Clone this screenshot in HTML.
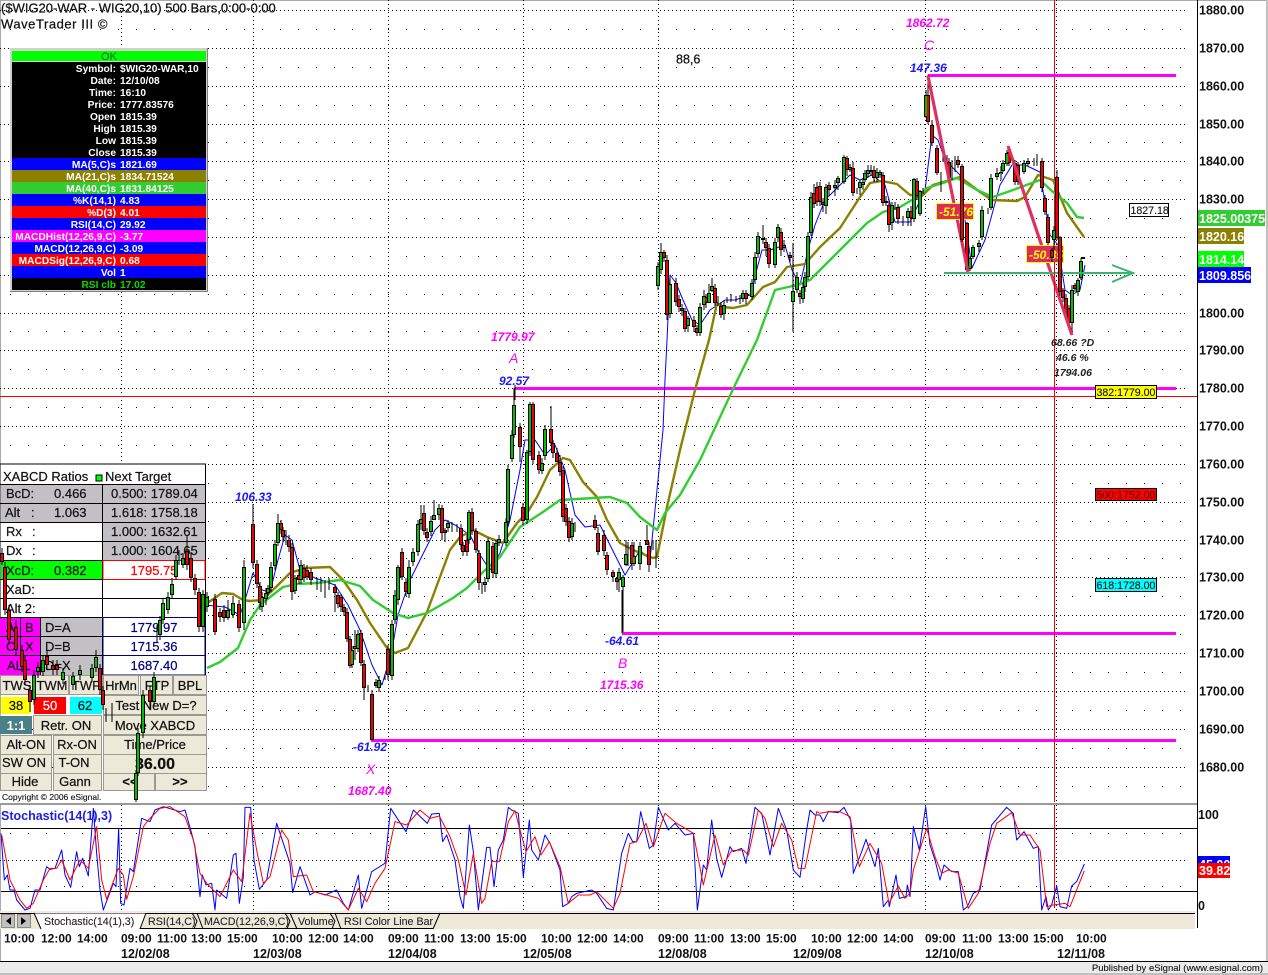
<!DOCTYPE html>
<html>
<head>
<meta charset="utf-8">
<title>WaveTrader chart</title>
<style>
html,body{margin:0;padding:0;background:#fff}
body{width:1268px;height:975px;overflow:hidden}
svg{display:block;font-family:"Liberation Sans",Arial,sans-serif}
.d{stroke:#000;stroke-width:1;stroke-dasharray:1 3;fill:none}
.s{stroke:#000;stroke-width:1;stroke-dasharray:1 17;stroke-dashoffset:-10;fill:none}
.ax{font-size:12.5px;font-weight:bold;fill:#111}
.tm{font-size:12px;font-weight:bold;fill:#111}
.ml{font-size:12px;font-style:italic;font-weight:bold;fill:#ff00ff}
.mb{font-size:14px;font-style:italic;fill:#ff00ff}
.bl{font-size:12px;font-style:italic;font-weight:bold;fill:#1a1aff}
.bk{font-size:10.5px;font-style:italic;font-weight:bold;fill:#222}
.i{font-size:10.2px;font-weight:bold;fill:#fff}
.e{text-anchor:end}
.p{font-size:13px;fill:#111;stroke:#111;stroke-width:.22}
.n{font-size:13px;fill:#000080;stroke:#000080;stroke-width:.22;text-anchor:middle}
.lb{font-size:10.6px;fill:#111;stroke:#111;stroke-width:.12}
.bt{fill:#ece9d8;stroke:#9a9a90;stroke-width:1}
.tb{font-size:10.7px;fill:#222;stroke:#222;stroke-width:.1}
.tt{font-size:13px;fill:#111;stroke:#111;stroke-width:.25}
.line{fill:none;stroke-linejoin:round}
</style>
</head>
<body>
<svg width="1268" height="975" viewBox="0 0 1268 975" xmlns="http://www.w3.org/2000/svg">
<rect width="1268" height="975" fill="#fff"/>
<rect x="0" y="0" width="1268" height="1" fill="#aaa"/>
<rect x="0" y="0" width="1" height="962" fill="#aaa"/>
<rect x="1266" y="0" width="2" height="975" fill="#c0c0c0"/>

<!-- dense horizontal grid -->
<g shape-rendering="crispEdges">
<path class="d" d="M0 10.5H1187M0 48.5H1187M0 86.5H1187M0 124.5H1187M0 161.5H1187M0 199.5H1187M0 237.5H1187M0 275.5H1187M0 313.5H1187M0 350.5H1187M0 388.5H1187M0 426.5H1187M0 464.5H1187M0 502.5H1187M0 540.5H1187M0 577.5H1187M0 615.5H1187M0 653.5H1187M0 691.5H1187M0 729.5H1187M0 767.5H1187"/>
<path class="s" d="M0 29.5H1187M0 67.5H1187M0 105.5H1187M0 142.5H1187M0 180.5H1187M0 218.5H1187M0 256.5H1187M0 294.5H1187M0 331.5H1187M0 369.5H1187M0 407.5H1187M0 445.5H1187M0 483.5H1187M0 521.5H1187M0 558.5H1187M0 596.5H1187M0 634.5H1187M0 672.5H1187M0 710.5H1187M0 748.5H1187M0 786.5H1187"/>
<path class="d" d="M121.5 0V802M253.5 0V802M388.5 0V802M523.5 0V802M658.5 0V802M793.5 0V802M925.5 0V802M1056.5 0V802"/>
<rect x="0" y="396" width="1197" height="1" fill="#f00"/>
<rect x="1054" y="0" width="1" height="802" fill="#f00"/>
<rect x="1197" y="0" width="1" height="928" fill="#000"/>
<rect x="0" y="803" width="1197" height="2" fill="#9a9a9a"/>
</g>

<!-- title -->
<text x="1" y="12.5" class="tt">($WIG20-WAR - WIG20,10) 500 Bars,0:00-0:00</text>
<text x="1" y="28.5" class="tt" letter-spacing=".55">WaveTrader III ©</text>
<text x="676" y="63.5" class="tt" style="font-size:12.5px">88,6</text>

<!-- y axis -->
<g class="ax">
<text x="1199" y="14.5">1880.00</text><text x="1199" y="52.5">1870.00</text><text x="1199" y="90.5">1860.00</text><text x="1199" y="128.5">1850.00</text><text x="1199" y="165.5">1840.00</text><text x="1199" y="203.5">1830.00</text><text x="1199" y="317.5">1800.00</text><text x="1199" y="354.5">1790.00</text><text x="1199" y="392.5">1780.00</text><text x="1199" y="430.5">1770.00</text><text x="1199" y="468.5">1760.00</text><text x="1199" y="506.5">1750.00</text><text x="1199" y="544.5">1740.00</text><text x="1199" y="581.5">1730.00</text><text x="1199" y="619.5">1720.00</text><text x="1199" y="657.5">1710.00</text><text x="1199" y="695.5">1700.00</text><text x="1199" y="733.5">1690.00</text><text x="1199" y="771.5">1680.00</text>
</g>
<rect x="1198" y="210" width="67" height="16" fill="#32cd32"/><text x="1199" y="223" font-size="12.5" font-weight="bold" fill="#fff">1825.00375</text>
<rect x="1198" y="228" width="46" height="16" fill="#8b8000"/><text x="1199" y="241" font-size="12.5" font-weight="bold" fill="#fff">1820.16</text>
<rect x="1198" y="251" width="46" height="16" fill="#00ff00"/><text x="1199" y="264" font-size="12.5" font-weight="bold" fill="#fff">1814.14</text>
<rect x="1198" y="267" width="53" height="16" fill="#0000ff"/><text x="1199" y="280" font-size="12.5" font-weight="bold" fill="#fff">1809.856</text>

<!-- magenta level lines -->
<g fill="#ff00ff" shape-rendering="crispEdges">
<rect x="928" y="74" width="248" height="3"/>
<rect x="515" y="387" width="661" height="3"/>
<rect x="622" y="632" width="554" height="3"/>
<rect x="371" y="739" width="805" height="3"/>
</g>
<path d="M622 590V633M371 710V740M515 385V400" stroke="#000" stroke-width="1" fill="none" shape-rendering="crispEdges"/>

<!-- XABCD panel -->
<g shape-rendering="crispEdges">
<rect x="0" y="464" width="205.5" height="211" fill="#fff" stroke="#000"/>
<rect x="1" y="484" width="101" height="38" fill="#c2c0c4"/>
<rect x="103" y="484" width="102" height="76" fill="#c2c0c4"/>
<rect x="1" y="560" width="101" height="19" fill="#00ff00"/>
<rect x="41" y="617" width="61" height="58" fill="#c2c0c4"/>
<rect x="0" y="617" width="40" height="58" fill="#ff00ff"/>
<path d="M0 484.5H205M0 503.5H205M0 522.5H205M0 541.5H205M0 560.5H103M0 579.5H205M0 598.5H205M0 617.5H103M0 636.5H103M0 655.5H103M102.5 484V675M40.5 617V675M20.5 617V655" stroke="#000" fill="none" stroke-width="1"/>
<rect x="103" y="560.5" width="102" height="19" fill="none" stroke="#f00"/>
<path d="M103 617.5H205V675H103ZM103 636.5H205M103 655.5H205" fill="none" stroke="#000080"/>
<rect x="96" y="475" width="6" height="6" fill="#00ff00" stroke="#000"/>
</g>
<g class="p">
<text x="3" y="481">XABCD Ratios</text><text x="105" y="481">Next Target</text>
<text x="6" y="498">BcD:</text><text x="54" y="498">0.466</text><text x="111" y="498">0.500: 1789.04</text>
<text x="5" y="517">Alt</text><text x="31" y="517">:</text><text x="54" y="517">1.063</text><text x="111" y="517">1.618: 1758.18</text>
<text x="6" y="536">Rx</text><text x="32" y="536">:</text><text x="111" y="536">1.000: 1632.61</text>
<text x="6" y="555">Dx</text><text x="32" y="555">:</text><text x="111" y="555">1.000: 1604.65</text>
<text x="6" y="575">XcD:</text><text x="54" y="575">0.382</text>
<text x="6" y="594">XaD:</text>
<text x="6" y="613">Alt 2:</text>
<text x="45" y="632">D=A</text><text x="45" y="651">D=B</text><text x="45" y="670">D=X</text>
<text x="6" y="632">A</text><text x="25" y="632">B</text><text x="6" y="651">C</text><text x="25" y="651">X</text><text x="7" y="670">ALL</text>
</g>
<text x="154" y="575" class="n" style="fill:#f00;stroke:#f00">1795.75</text>
<text x="154" y="632" class="n">1779.97</text>
<text x="154" y="651" class="n">1715.36</text>
<text x="154" y="670" class="n">1687.40</text>

<!-- buttons -->
<g shape-rendering="crispEdges">
<rect class="bt" x="0.5" y="675.5" width="34" height="19"/><rect class="bt" x="35.5" y="675.5" width="33" height="19"/><rect class="bt" x="69.5" y="675.5" width="33" height="19"/><rect class="bt" x="103.5" y="675.5" width="35" height="19"/><rect class="bt" x="140.5" y="675.5" width="32" height="19"/><rect class="bt" x="173.5" y="675.5" width="33" height="19"/>
<rect x="1" y="697" width="30" height="17" fill="#ffff00"/><rect x="34" y="697" width="32" height="17" fill="#f00"/><rect x="70" y="697" width="32" height="17" fill="#00ffff"/>
<rect class="bt" x="103.5" y="695.5" width="103" height="19"/>
<rect x="0" y="716" width="32" height="18" fill="#4a8088"/>
<rect class="bt" x="33.5" y="715.5" width="68" height="19"/><rect class="bt" x="103.5" y="715.5" width="103" height="19"/>
<rect class="bt" x="0.5" y="735.5" width="51" height="19"/><rect class="bt" x="53.5" y="735.5" width="48" height="19"/><rect class="bt" x="103.5" y="735.5" width="103" height="19"/>
<rect class="bt" x="0.5" y="754.5" width="51" height="19"/><rect class="bt" x="53.5" y="754.5" width="48" height="19"/><rect class="bt" x="103.5" y="754.5" width="103" height="19"/>
<rect class="bt" x="0.5" y="773.5" width="51" height="17"/><rect class="bt" x="53.5" y="773.5" width="48" height="17"/><rect class="bt" x="103.5" y="773.5" width="51" height="17"/><rect class="bt" x="155.5" y="773.5" width="51" height="17"/>
</g>
<g class="p" style="text-anchor:middle">
<text x="17" y="690">TWS</text><text x="52" y="690">TWM</text><text x="86" y="690">TWF</text><text x="121" y="690">HrMn</text><text x="157" y="690">FTP</text><text x="190" y="690">BPL</text>
<text x="16" y="710">38</text><text x="50" y="710" style="fill:#fff;stroke:#fff">50</text><text x="85" y="710">62</text><text x="156" y="710">Test New D=?</text>
<text x="16" y="730" style="fill:#fff;stroke:none;font-weight:bold">1:1</text><text x="66" y="730">Retr. ON</text><text x="155" y="730">Move XABCD</text>
<text x="26" y="749">Alt-ON</text><text x="77" y="749">Rx-ON</text><text x="155" y="749">Time/Price</text>
<text x="24" y="767">SW ON</text><text x="74" y="767">T-ON</text><text x="155" y="769" style="font-size:16px;font-weight:bold">36.00</text>
<text x="25" y="786">Hide</text><text x="75" y="786">Gann</text><text x="130" y="786" style="font-weight:bold">&lt;&lt;</text><text x="180" y="786" style="font-weight:bold">&gt;&gt;</text>
</g>
<rect x="0" y="791" width="130" height="12" fill="#fff"/>
<text x="2" y="800" font-size="8.5" fill="#111" stroke="#111" stroke-width=".12">Copyright © 2006 eSignal.</text>

<!-- data box -->
<g shape-rendering="crispEdges">
<rect x="10" y="48" width="198" height="244" fill="#d4d0c8"/>
<path d="M207.5 48V291.5H10" fill="none" stroke="#808080"/>
<rect x="12" y="51" width="194" height="10" fill="#00ff00"/>
<rect x="12" y="62" width="194" height="96" fill="#000"/>
<rect x="12" y="158" width="194" height="12" fill="#00f"/>
<rect x="12" y="170" width="194" height="12" fill="#8b8000"/>
<rect x="12" y="182" width="194" height="12" fill="#32cd32"/>
<rect x="12" y="194" width="194" height="12" fill="#00f"/>
<rect x="12" y="206" width="194" height="12" fill="#f00"/>
<rect x="12" y="218" width="194" height="12" fill="#00f"/>
<rect x="12" y="230" width="194" height="12" fill="#f0f"/>
<rect x="12" y="242" width="194" height="12" fill="#00f"/>
<rect x="12" y="254" width="194" height="12" fill="#f00"/>
<rect x="12" y="266" width="194" height="12" fill="#00f"/>
<rect x="12" y="278" width="194" height="12" fill="#000"/>
</g>
<text x="109" y="60" font-size="11" fill="#063" text-anchor="middle">OK</text>
<g class="i">
<text class="e" x="116" y="72">Symbol:</text><text x="120" y="72">$WIG20-WAR,10</text>
<text class="e" x="116" y="84">Date:</text><text x="120" y="84">12/10/08</text>
<text class="e" x="116" y="96">Time:</text><text x="120" y="96">16:10</text>
<text class="e" x="116" y="108">Price:</text><text x="120" y="108">1777.83576</text>
<text class="e" x="116" y="120">Open</text><text x="120" y="120">1815.39</text>
<text class="e" x="116" y="132">High</text><text x="120" y="132">1815.39</text>
<text class="e" x="116" y="144">Low</text><text x="120" y="144">1815.39</text>
<text class="e" x="116" y="156">Close</text><text x="120" y="156">1815.39</text>
<text class="e" x="116" y="168">MA(5,C)s</text><text x="120" y="168">1821.69</text>
<text class="e" x="116" y="180">MA(21,C)s</text><text x="120" y="180">1834.71524</text>
<text class="e" x="116" y="192">MA(40,C)s</text><text x="120" y="192">1831.84125</text>
<text class="e" x="116" y="204">%K(14,1)</text><text x="120" y="204">4.83</text>
<text class="e" x="116" y="216">%D(3)</text><text x="120" y="216">4.01</text>
<text class="e" x="116" y="228">RSI(14,C)</text><text x="120" y="228">29.92</text>
<text class="e" x="116" y="240">MACDHist(12,26,9,C)</text><text x="120" y="240">-3.77</text>
<text class="e" x="116" y="252">MACD(12,26,9,C)</text><text x="120" y="252">-3.09</text>
<text class="e" x="116" y="264">MACDSig(12,26,9,C)</text><text x="120" y="264">0.68</text>
<text class="e" x="116" y="276">Vol</text><text x="120" y="276">1</text>
<text class="e" x="116" y="288" style="fill:#00e000">RSI clb</text><text x="120" y="288" style="fill:#00e000">17.02</text>
</g>

<!-- MA lines under candles -->
<polyline class="line" stroke="#0000ff" stroke-width="1" points="205,605 225,607 240,615 245,600 253,573 262,590 270,592 278,560 285,535 292,540 300,570 315,578 335,585 348,605 360,630 372,665 382,685 392,650 398,615 410,580 420,560 435,530 445,520 455,525 470,535 480,555 490,570 500,553 510,520 520,470 525,440 535,440 545,455 555,445 565,470 575,515 585,527 600,525 610,545 625,575 640,550 650,560 657,490 663,430 665,380 667,340 670,275 676,283 683,300 692,320 700,325 710,310 725,300 735,300 750,295 762,250 770,250 785,245 792,270 800,285 808,250 815,225 825,200 835,190 850,175 860,180 872,175 885,185 895,222 910,222 925,190 932,135 938,140 945,160 960,175 965,220 972,268 985,240 1000,185 1012,165 1025,165 1040,172 1050,235 1058,245 1065,290 1072,295 1080,290 1085,265"/>
<polyline class="line" stroke="#8b8000" stroke-width="2.4" points="206,604 222,593 233,594 243,600 250,601 262,600 275,588 290,573 305,568 330,567 343,580 357,600 370,623 387,648 395,653 408,648 427,612 440,577 450,550 460,537 473,530 487,537 503,543 517,523 527,513 537,497 550,470 563,458 570,460 583,482 597,497 607,520 620,543 633,550 653,558 657,557 667,507 680,450 695,390 709,340 717,303 723,307 733,308 747,305 763,287 775,282 787,267 805,264 820,247 840,228 860,197 870,183 882,181 897,184 910,195 923,195 933,185 960,177 980,192 992,200 1017,201 1025,197 1038,175 1053,180 1067,213 1084,237"/>
<polyline class="line" stroke="#32cd32" stroke-width="2.4" points="207,668 220,662 238,648 250,620 260,605 283,587 297,584 317,583 340,580 360,586 373,600 393,613 408,618 427,613 453,598 467,588 483,572 500,557 520,527 543,512 560,500 577,499 610,497 627,503 640,517 657,530 665,513 680,495 700,460 735,385 757,340 775,290 797,285 810,280 833,257 867,223 883,212 900,207 917,197 927,188 943,183 957,178 977,190 993,197 1013,190 1040,180 1053,192 1067,203 1077,217 1084,218"/>

<!-- candles -->
<path fill="none" stroke="#000" stroke-width="1" shape-rendering="crispEdges" d="M2 548V565M5 562V615M9 605V645M16 620V655M22 645V672M25 655V685M30 685V712M34 670V705M38 662V678M43 655V676M47 650V670M53 660V675M57 660V675M63 668V684M73 672V690M80 665V680M92 664V682M96 650V672M100 664V695M103 686V710M106 708V722M112 703V722M136 770V802M138 728V776M143 690V738M150 686V708M154 672V706M157 625V642M160 616V640M163 598V624M168 592V614M172 578V598M176 555V580M179 550V565M183 553V568M187 535V570M191 552V582M195 574V595M199 588V632M203 590V632M207 592V612M215 594V635M220 608V622M224 605V622M228 600V620M233 596V618M239 600V632M244 560V630M253 504V568M257 560V588M260 582V610M262 592V612M266 588V605M268 585V596M271 562V592M275 540V570M278 514V546M281 520V534M283 527V542M286 530V545M289 535V552M292 543V600M295 575V594M299 570V584M301 560V584M304 564V582M307 565V580M311 568V585M317 578V590M321 578V592M325 580V598M329 578V590M335 584V612M338 592V608M341 594V612M344 604V616M347 608V642M350 636V668M352 646V668M355 630V660M358 630V652M361 630V666M364 660V700M368 685V692M372 690V740M376 679V688M379 676V692M385 674V680M388 645V680M392 620V680M395 590V624M398 565V605M402 548V580M406 578V596M409 560V598M413 548V566M418 520V556M421 505V530M424 505V535M427 528V542M431 516V536M434 500V520M439 504V520M442 505V540M445 528V542M448 520V532M452 522V532M457 524V532M461 524V550M463 542V556M467 535V556M469 510V544M472 508V535M476 528V553M479 550V590M482 582V594M485 578V592M488 538V582M493 542V578M496 540V578M499 535V546M506 518V546M508 465V525M512 430V462M514 388V438M520 423V462M523 503V525M527 450V524M530 402V456M533 402V464M539 451V474M542 458V474M545 425V460M551 406V446M553 440V458M557 448V462M560 455V476M563 466V522M566 504V526M569 517V542M572 518V540M575 522V532M595 515V530M598 527V555M604 530V556M607 552V575M613 570V582M617 577V590M619 568V592M623 575V632M626 540V566M628 542V566M632 542V570M634 542V566M640 542V570M647 525V542M649 542V572M653 540V550M656 540V568M658 262V290M661 243V274M664 250V262M667 255V320M670 278V318M676 278V306M679 295V312M682 304V316M685 308V332M688 316V332M694 316V332M697 325V336M700 303V336M704 290V310M706 294V308M709 284V302M712 278V292M715 284V306M718 296V306M721 302V318M724 300V320M727 297V303M731 294V302M736 296V302M740 295V304M743 290V302M746 290V304M752 279V300M755 252V284M758 232V258M763 225V244M766 238V256M769 244V268M775 238V268M778 224V242M781 228V256M784 240V252M790 252V262M793 243V332M797 272V293M800 290V304M803 283V303M805 272V292M808 232V280M811 192V236M814 184V208M817 182V206M820 182V206M823 198V212M826 184V214M829 182V196M835 180V196M838 176V190M844 155V184M847 156V176M850 164V172M853 162V196M857 188V194M860 180V195M863 178V190M865 170V182M868 165V178M871 165V176M874 166V182M877 168V182M880 170V178M883 172V206M886 196V206M889 200V232M892 202V230M895 202V210M898 204V224M903 216V226M908 208V226M911 206V226M914 178V222M917 178V200M920 190V216M923 188V194M926 90V118M928 75V124M932 120V146M937 145V175M941 172V192M943 155V162M947 155V162M949 158V182M952 160V180M955 156V172M958 156V168M962 164V242M967 222V272M970 256V271M973 245V259M979 240V252M982 206V240M988 208V214M991 174V210M997 168V180M1001 166V180M1003 160V172M1007 150V166M1009 148V166M1015 160V185M1018 162V185M1024 160V174M1028 158V166M1034 158V166M1037 154V166M1042 158V192M1045 195V215M1048 214V246M1052 248V262M1054 226V250M1057 170V240M1060 236V296M1063 288V302M1066 294V318M1069 305V326M1072 285V335M1075 283V292M1078 278V296M1081 258V280"/>

<path fill="none" stroke="#000" stroke-width="4" shape-rendering="crispEdges" d="M34 675V700M38 667V672M43 660V672M63 672V680M73 676V685M80 670V675M92 668V678M96 657V668M136 773V800M138 733V773M143 695V733M154 677V702M160 620V635M163 603V620M168 597V610M172 584V595M176 560V577M183 558V565M203 594V627M207 597V607M228 610V618M233 603V615M244 567V623M262 597V607M266 593V599M268 588V593M271 567V588M275 544V566M278 523V543M295 578V591M301 565V580M352 650V665M355 646V649M358 634V649M379 680V688M392 624V676M395 595V620M398 567V600M409 567V594M413 552V562M418 524V552M421 519V524M431 521V532M434 515V520M439 508V515M448 523V528M469 512V540M485 582V585M488 541V579M496 543V574M499 539V543M506 522V543M508 469V522M512 435V459M514 405V435M527 452V520M530 404V452M542 463V471M545 429V456M572 523V537M619 572V580M623 577V587M626 554V565M634 556V564M640 546V564M658 266V286M661 252V270M670 284V314M688 318V326M700 307V333M704 296V305M709 293V303M712 286V291M724 305V314M743 293V299M752 283V297M755 257V280M758 236V254M775 242V265M778 227V238M784 245V248M793 291V302M797 277V290M803 287V299M805 277V287M808 236V277M811 197V233M826 187V206M835 185V188M838 178V183M844 157V182M850 167V170M860 182V188M863 182V185M865 173V180M868 170V174M871 170V172M877 172V178M880 172V175M886 201V203M892 205V223M908 211V218M914 179V219M920 191V214M926 95V117M970 258V269M973 247V257M979 243V247M982 210V237M991 178V208M997 173V177M1001 172V174M1003 163V171M1007 153V164M1024 163V172M1028 161V164M1072 290V323M1078 280V292M1081 261V278"/>
<path fill="none" stroke="#000" stroke-width="4" shape-rendering="crispEdges" d="M2 553V562M5 567V610M9 610V640M16 627V650M22 650V667M25 660V680M30 690V702M47 656V665M53 665V670M57 665V670M100 668V690M103 690V705M150 690V702M187 551V565M191 558V578M195 578V590M199 592V627M215 599V632M220 612V617M224 610V618M239 604V628M253 524V563M257 564V584M260 586V603M281 523V530M283 530V537M289 540V547M292 547V592M299 575V580M304 568V578M307 570V577M311 572V580M335 587V593M338 595V604M341 597V607M344 607V612M347 612V639M350 639V666M361 633V663M364 664V688M372 694V740M376 682V686M388 649V675M402 552V577M406 582V592M424 513V531M427 532V538M442 508V533M445 530V533M461 528V545M463 545V552M467 540V552M472 512V531M476 531V550M479 553V583M493 546V573M520 427V447M523 507V521M533 404V460M539 455V470M551 429V443M553 443V453M557 453V462M560 462V472M563 470V517M566 508V522M569 521V538M595 520V528M598 533V552M604 535V551M607 555V570M613 572V577M617 578V582M632 545V564M647 540V545M649 546V565M664 252V258M667 260V315M676 283V302M679 299V307M682 308V311M685 311V329M694 320V327M697 328V333M706 297V303M715 288V303M721 306V315M746 293V299M763 238V240M766 242V248M769 248V264M781 232V250M790 255V258M800 293V297M814 193V204M817 187V202M820 186V202M823 202V205M829 185V190M847 158V170M853 168V193M874 170V178M883 175V203M889 205V225M898 207V219M911 211V218M917 181V196M928 95V122M932 125V143M937 148V173M949 162V178M958 160V165M962 166V240M967 223V270M1009 152V163M1015 163V182M1018 165V182M1042 161V188M1045 198V212M1048 217V243M1063 290V298M1066 298V315M1069 308V323M1075 285V289"/>
<g fill="none" stroke-width="2" shape-rendering="crispEdges">
<path stroke="#00c000" d="M34 676V699M38 668V671M43 661V671M63 673V679M73 677V684M80 671V674M92 669V677M96 658V667M136 774V799M138 734V772M143 696V732M154 678V701M160 621V634M163 604V619M168 598V609M172 585V594M176 561V576M183 559V564M203 595V626M207 598V606M228 611V617M233 604V614M244 568V622M262 598V606M266 594V598M268 589V592M271 568V587M275 545V565M278 524V542M295 579V590M301 566V579M352 651V664M355 647V648M358 635V648M379 681V687M392 625V675M395 596V619M398 568V599M409 568V593M413 553V561M418 525V551M421 520V523M431 522V531M434 516V519M439 509V514M448 524V527M469 513V539M485 583V584M488 542V578M496 544V573M499 540V542M506 523V542M508 470V521M512 436V458M514 406V434M527 453V519M530 405V451M542 464V470M545 430V455M572 524V536M619 573V579M623 578V586M626 555V564M634 557V563M640 547V563M658 267V285M661 253V269M670 285V313M688 319V325M700 308V332M704 297V304M709 294V302M712 287V290M724 306V313M743 294V298M752 284V296M755 258V279M758 237V253M775 243V264M778 228V237M784 246V247M793 292V301M797 278V289M803 288V298M805 278V286M808 237V276M811 198V232M826 188V205M835 186V187M838 179V182M844 158V181M850 168V169M860 183V187M863 183V184M865 174V179M868 171V173M877 173V177M880 173V174M892 206V222M908 212V217M914 180V218M920 192V213M926 96V116M970 259V268M973 248V256M979 244V246M982 211V236M991 179V207M997 174V176M1001 173V174M1003 164V170M1007 154V163M1024 164V171M1028 162V163M1072 291V322M1078 281V291M1081 262V277"/>
<path stroke="#f00000" d="M2 554V561M5 568V609M9 611V639M16 628V649M22 651V666M25 661V679M30 691V701M47 657V664M53 666V669M57 666V669M100 669V689M103 691V704M150 691V701M187 552V564M191 559V577M195 579V589M199 593V626M215 600V631M220 613V616M224 611V617M239 605V627M253 525V562M257 565V583M260 587V602M281 524V529M283 531V536M289 541V546M292 548V591M299 576V579M304 569V577M307 571V576M311 573V579M335 588V592M338 596V603M341 598V606M344 608V611M347 613V638M350 640V665M361 634V662M364 665V687M372 695V739M376 683V685M388 650V674M402 553V576M406 583V591M424 514V530M427 533V537M442 509V532M445 531V532M461 529V544M463 546V551M467 541V551M472 513V530M476 532V549M479 554V582M493 547V572M520 428V446M523 508V520M533 405V459M539 456V469M551 430V442M553 444V452M557 454V461M560 463V471M563 471V516M566 509V521M569 522V537M595 521V527M598 534V551M604 536V550M607 556V569M613 573V576M617 579V581M632 546V563M647 541V544M649 547V564M664 253V257M667 261V314M676 284V301M679 300V306M682 309V310M685 312V328M694 321V326M697 329V332M706 298V302M715 289V302M721 307V314M746 294V298M766 243V247M769 249V263M781 233V249M790 256V257M800 294V296M814 194V203M817 188V201M820 187V201M823 203V204M829 186V189M847 159V169M853 169V192M874 171V177M883 176V202M889 206V224M898 208V218M911 212V217M917 182V195M928 96V121M932 126V142M937 149V172M949 163V177M958 161V164M962 167V239M967 224V269M1009 153V162M1015 164V181M1018 166V181M1042 162V187M1045 199V211M1048 218V242M1063 291V297M1066 299V314M1069 309V322M1075 286V288"/>
</g>
<path d="M1081 258h4" stroke="#000" stroke-width="2" fill="none"/>

<!-- pink swing lines, arrow -->
<path d="M928 76L968 272M1008 146L1072 335" stroke="#e0305f" stroke-width="3.2" fill="none"/>
<path d="M944 273H1134M1112 265L1133 273L1112 282" stroke="#3cb371" stroke-width="2" fill="none"/>
<g shape-rendering="crispEdges">
<rect x="936.5" y="203.5" width="37" height="16" fill="#dc2c5c" stroke="#ffff00"/>
<rect x="1026.5" y="245.5" width="37" height="17" fill="#dc2c5c" stroke="#ffff00"/>
</g>
<text x="939" y="216" font-size="12" font-weight="bold" font-style="italic" fill="#ffff00">-51.76</text>
<text x="1029" y="259" font-size="12" font-weight="bold" font-style="italic" fill="#ffff00">-50.85</text>
<!-- candles drawn above the labels -->
<g fill="none" shape-rendering="crispEdges">
<path stroke="#000" stroke-width="1" d="M962 164V242M1052 248V262M1054 226V250M1057 170V240M1060 236V296"/>
<path stroke="#000" stroke-width="4" d="M962 166V240M1052 250V258M1054 230V240M1057 177V238M1060 237V292"/>
<path stroke="#f00000" stroke-width="2" d="M962 167V239M1052 251V257M1057 178V237M1060 238V291"/>
<path stroke="#00c000" stroke-width="2" d="M1054 231V239"/>
</g>
<rect x="1054" y="262" width="1" height="540" fill="#f00" shape-rendering="crispEdges"/>

<!-- annotations -->
<text x="906" y="27" class="ml">1862.72</text>
<text x="924" y="50" class="mb">C</text>
<text x="910" y="72" class="bl">147.36</text>
<text x="491" y="341" class="ml">1779.97</text>
<text x="509" y="363" class="mb">A</text>
<text x="499" y="385" class="bl">92.57</text>
<text x="235" y="501" class="bl">106.33</text>
<text x="605" y="645" class="bl">-64.61</text>
<text x="618" y="668" class="mb">B</text>
<text x="600" y="689" class="ml">1715.36</text>
<text x="353" y="751" class="bl">-61.92</text>
<text x="366" y="774" class="mb">X</text>
<text x="348" y="795" class="ml">1687.40</text>
<text x="1051" y="346" class="bk">68.66 ?D</text>
<text x="1056" y="361" class="bk">46.6 %</text>
<text x="1054" y="376" class="bk">1794.06</text>

<!-- level boxes -->
<g shape-rendering="crispEdges">
<rect x="1129.5" y="203.5" width="39" height="13" fill="#fff" stroke="#000"/>
<rect x="1095.5" y="385.5" width="61" height="13" fill="#ffff00" stroke="#000"/>
<rect x="1095.5" y="488.5" width="61" height="12" fill="#f00" stroke="#000"/>
<rect x="1095.5" y="578.5" width="61" height="13" fill="#00ffff" stroke="#000"/>
</g>
<text x="1130.5" y="214" class="lb">1827.18</text>
<text x="1096.5" y="396" class="lb">382:1779.00</text>
<text x="1096.5" y="498.5" class="lb" style="fill:#500;stroke:#500">500:1752.00</text>
<text x="1096.5" y="589" class="lb">618:1728.00</text>

<!-- stochastic panel -->
<g shape-rendering="crispEdges">
<path d="M1 828.5H1197M1 891.5H1197" stroke="#000" fill="none"/>
<path class="d" d="M0 860.5H1187"/>
<path class="s" d="M0 833.5H1187M0 886.5H1187"/>
<path class="d" d="M121.5 805V910M253.5 805V910M388.5 805V910M523.5 805V910M658.5 805V910M793.5 805V910M925.5 805V910M1056.5 805V910"/>
<rect x="1054" y="805" width="1" height="103" fill="#f00"/>
</g>
<g transform="translate(0,800) scale(.33333)" fill="none" stroke-linejoin="round">
<polyline stroke="#00f" stroke-width="3" points="3,100 13,240 22,225 30,270 42,270 50,300 75,330 90,325 105,270 120,270 140,200 150,208 165,205 185,150 195,225 212,262 230,155 238,200 248,175 265,228 280,25 290,160 300,270 310,330 340,250 348,260 356,85 362,310 372,315 390,205 400,215 425,55 450,65 465,30 490,20 540,35 555,30 575,100 585,140 600,290 607,225 618,255 635,250 645,330 650,270 680,295 700,165 708,160 718,310 730,230 735,22 752,22 762,180 778,268 800,240 830,70 870,190 878,278 900,200 930,285 945,275 975,285 1010,270 1030,310 1045,330 1075,225 1085,325 1115,215 1155,190 1172,25 1218,95 1240,30 1282,70 1295,42 1318,40"/>
<polyline stroke="#f00" stroke-width="3" points="5,105 30,240 60,300 80,325 100,310 130,240 150,205 170,205 185,180 210,240 240,180 265,205 290,80 305,240 320,298 355,205 370,225 380,298 400,230 430,80 445,60 480,25 510,20 555,50 580,120 600,220 620,250 660,290 700,210 725,245 750,40 770,150 790,250 810,230 845,90 865,120 880,230 920,225 940,275 980,285 1015,295 1045,330 1075,265 1100,305 1125,250 1155,205 1185,65 1220,75 1260,30 1290,55 1318,48"/>
</g>
<g transform="translate(440,800) scale(.33333)" fill="none" stroke-linejoin="round">
<polyline stroke="#00f" stroke-width="3" points="-2,40 8,125 20,105 45,180 60,290 70,325 88,75 100,155 115,330 140,142 150,142 162,260 175,150 190,120 205,22 215,30 235,40 250,232 268,60 275,150 295,180 315,105 330,130 360,210 368,320 385,310 395,290 410,280 455,270 470,280 500,325 520,330 545,160 565,100 578,125 590,125 602,35 628,145 640,135 655,22 685,90 705,70 735,105 760,100 772,330 790,195 800,210 815,60 830,175 845,232 870,140 880,155 905,145 918,190 945,22 965,40 990,165 1015,25 1040,90 1060,210 1080,232 1100,90 1110,30 1125,45 1140,45"/>
<polyline stroke="#f00" stroke-width="3" points="-2,48 30,110 55,180 78,285 100,160 125,310 135,295 155,185 178,185 205,65 225,32 240,90 258,155 285,110 303,165 328,125 360,200 385,310 415,285 450,285 470,275 520,325 540,280 570,130 590,125 618,70 640,140 675,40 710,70 760,100 790,255 825,105 850,195 875,152 910,150 925,165 955,30 975,55 1000,140 1025,70 1055,120 1075,205 1095,205 1130,35 1140,40"/>
</g>
<g transform="translate(820,800) scale(.33333)" fill="none" stroke-linejoin="round">
<polyline stroke="#00f" stroke-width="3" points="0,45 10,65 25,35 55,38 72,22 92,60 100,220 125,155 138,118 165,200 175,145 190,320 205,300 208,320 228,225 238,295 258,290 262,255 270,290 280,80 298,150 317,20 330,135 345,180 360,240 372,195 395,215 415,215 430,330 442,320 460,280 480,270 515,75 560,22 580,40 590,120 612,95 640,145 655,140 665,330 678,290 685,330 695,315 710,258 720,320 740,325 755,258 770,245 793,192"/>
<polyline stroke="#f00" stroke-width="3" points="0,40 25,35 60,35 90,50 118,200 150,130 185,190 207,310 235,258 255,295 270,280 280,210 320,85 345,170 365,220 385,210 415,220 445,325 475,280 510,130 530,70 575,38 600,105 630,105 660,150 680,320 700,315 735,310 750,320 793,212"/>
</g>
<text x="1" y="820" font-size="12.5" font-weight="bold" fill="#2020e0">Stochastic(14(1),3)</text>
<text x="1198" y="819" class="ax">100</text>
<text x="1198" y="910" class="ax">0</text>
<rect x="1198" y="856" width="32" height="8" fill="#00f"/>
<text x="1199" y="869" font-size="12.5" font-weight="bold" fill="#fff">45.00</text>
<rect x="1198" y="863" width="32" height="15" fill="#f00"/>
<text x="1199" y="875" font-size="12.5" font-weight="bold" fill="#fff">39.82</text>

<!-- tab row -->
<rect x="0" y="911" width="1197" height="2" fill="#f5e8e0"/>
<rect x="0" y="913" width="1195" height="16" fill="#ece9d8"/>
<rect x="0" y="913" width="1195" height="1" fill="#000"/>
<rect x="1.5" y="914.5" width="13" height="13" fill="#c0c0c0" stroke="#888"/>
<rect x="17.5" y="914.5" width="13" height="13" fill="#c0c0c0" stroke="#888"/>
<path d="M11 917L6 921L11 925ZM21 917L26 921L21 925Z" fill="#000"/>
<path d="M140 928.5H433" stroke="#000" fill="none"/>
<path d="M34 913.5L41 929H140L146 913.5Z" fill="#fff"/>
<path d="M34 913L41 929M140 929L146 913" stroke="#000" fill="none"/>
<path d="M192 913L197 921L194 929M197 913L203 929M285 913L290 921L287 929M290 913L297 929M330 913L335 921L332 929M335 913L341 929M433 929L440 913" stroke="#000" stroke-width="1" fill="none"/>
<text x="44" y="925" class="tb">Stochastic(14(1),3)</text>
<text x="148" y="925" class="tb">RSI(14,C)</text>
<text x="204" y="925" class="tb">MACD(12,26,9,C)</text>
<text x="298" y="925" class="tb">Volume</text>
<text x="344" y="925" class="tb">RSI Color Line Bar</text>

<!-- time axis -->
<g class="tm">
<text x="4" y="942.5">10:00</text><text x="41" y="942.5">12:00</text><text x="77" y="942.5">14:00</text><text x="121" y="942.5">09:00</text><text x="157" y="942.5">11:00</text><text x="191" y="942.5">13:00</text><text x="227" y="942.5">15:00</text><text x="272" y="942.5">10:00</text><text x="308" y="942.5">12:00</text><text x="343" y="942.5">14:00</text><text x="388" y="942.5">09:00</text><text x="424" y="942.5">11:00</text><text x="460" y="942.5">13:00</text><text x="496" y="942.5">15:00</text><text x="541" y="942.5">10:00</text><text x="577" y="942.5">12:00</text><text x="613" y="942.5">14:00</text><text x="658" y="942.5">09:00</text><text x="694" y="942.5">11:00</text><text x="730" y="942.5">13:00</text><text x="766" y="942.5">15:00</text><text x="811" y="942.5">10:00</text><text x="847" y="942.5">12:00</text><text x="883" y="942.5">14:00</text><text x="925" y="942.5">09:00</text><text x="962" y="942.5">11:00</text><text x="998" y="942.5">13:00</text><text x="1033" y="942.5">15:00</text><text x="1076" y="942.5">10:00</text>
</g>
<g class="ax">
<text x="121" y="958">12/02/08</text><text x="253" y="958">12/03/08</text><text x="388" y="958">12/04/08</text><text x="523" y="958">12/05/08</text><text x="658" y="958">12/08/08</text><text x="793" y="958">12/09/08</text><text x="925" y="958">12/10/08</text><text x="1057" y="958">12/11/08</text>
</g>
<rect x="0" y="961" width="1268" height="1" fill="#000"/>
<rect x="0" y="962" width="1268" height="13" fill="#ececec"/>
<rect x="0" y="973" width="1268" height="2" fill="#c0c0c0"/>
<text x="1263" y="971" font-size="9.5" fill="#111" stroke="#111" stroke-width=".1" text-anchor="end">Published by eSignal (www.esignal.com)</text>
</svg>
</body>
</html>
